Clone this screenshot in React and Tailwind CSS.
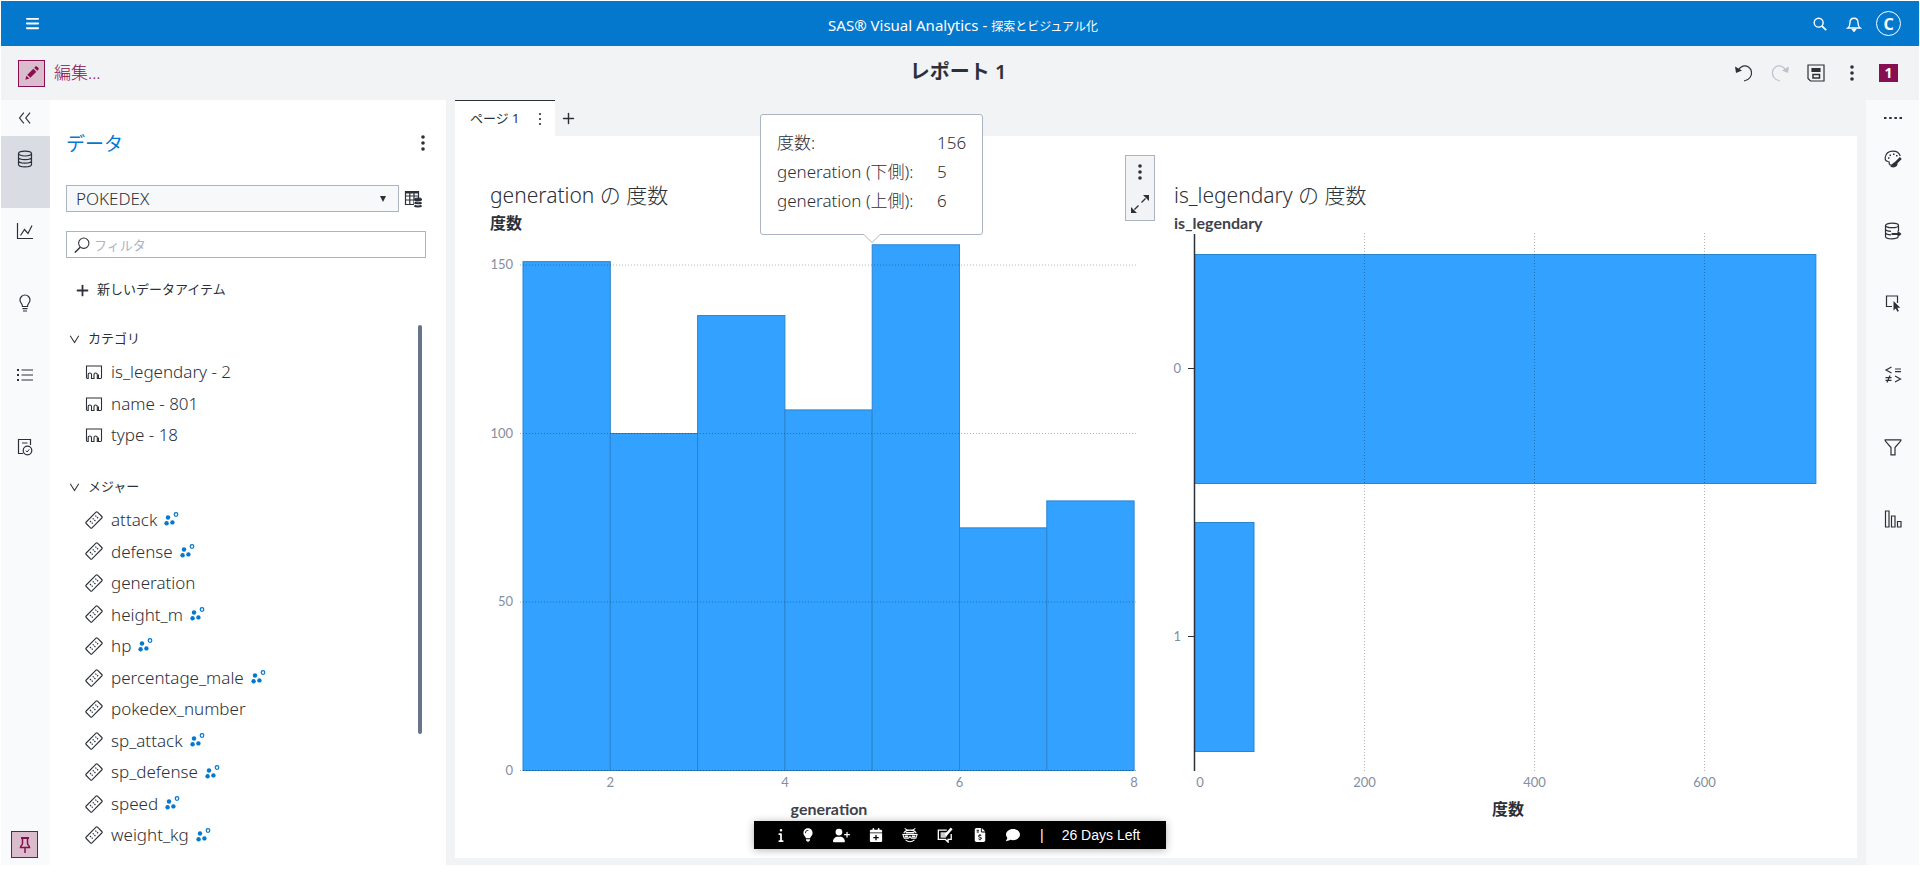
import clsx from 'clsx'
import { FaBars, FaInfo, FaLightbulb, FaUserPlus, FaFileInvoiceDollar, FaComment, FaCalendarPlus } from 'react-icons/fa6'
import { Plus } from 'lucide-react'

const categories = ['is_legendary - 2', 'name - 801', 'type - 18']

const measures = [
  { name: 'attack', related: true },
  { name: 'defense', related: true },
  { name: 'generation', related: false },
  { name: 'height_m', related: true },
  { name: 'hp', related: true },
  { name: 'percentage_male', related: true },
  { name: 'pokedex_number', related: false },
  { name: 'sp_attack', related: true },
  { name: 'sp_defense', related: true },
  { name: 'speed', related: true },
  { name: 'weight_kg', related: true },
]

const bins = [151, 100, 135, 107, 156, 72, 80]

const legendary = [
  { label: '0', value: 731 },
  { label: '1', value: 70 },
]

function Icon({ size = 18, className, children }) {
  return (
    <svg
      width={size}
      height={size}
      viewBox="0 0 18 18"
      fill="none"
      stroke="currentColor"
      strokeWidth="1.2"
      className={clsx('shrink-0', className)}
      aria-hidden="true"
    >
      {children}
    </svg>
  )
}

function Dots({ small }) {
  return (
    <Icon>
      <g fill="currentColor" stroke="none">
        <circle cx="9" cy={small ? 4 : 3} r={small ? 1.1 : 1.8} />
        <circle cx="9" cy="9" r={small ? 1.1 : 1.8} />
        <circle cx="9" cy={small ? 14 : 15} r={small ? 1.1 : 1.8} />
      </g>
    </Icon>
  )
}

const leftRail = [
  {
    label: 'データ',
    active: true,
    icon: (
      <>
        <ellipse cx="9" cy="3.6" rx="6.5" ry="2.4" />
        <path d="M2.5 3.6v10.8c0 1.4 2.9 2.4 6.5 2.4s6.5-1 6.5-2.4V3.6M2.5 7.2c0 1.4 2.9 2.4 6.5 2.4s6.5-1 6.5-2.4M2.5 10.8c0 1.4 2.9 2.4 6.5 2.4s6.5-1 6.5-2.4" />
      </>
    ),
  },
  { label: 'オブジェクト', icon: <path d="M1.5 1v15.5H17M4.5 13.5l4-6 3.5 4L16 3.5" /> },
  {
    label: '提案',
    icon: <path d="M6.5 12.5c0-3-2.5-3.5-2.5-6.5a5 5 0 0 1 10 0c0 3-2.5 3.5-2.5 6.5zM6.5 14.7h5M7 17h4" />,
  },
  {
    label: 'アウトライン',
    icon: (
      <>
        <path d="M5.5 4H17M5.5 9H17M5.5 14H17" />
        <path d="M1 4h2M1 9h2M1 14h2" strokeWidth="2" />
      </>
    ),
  },
  {
    label: 'レビュー',
    icon: (
      <>
        <path d="M7 15.5H2.5v-14h12V7M6 5h5.500" />
        <circle cx="11.5" cy="12.5" r="4.3" />
        <path d="M9.8 12.7l1.3 1.3 2.2-2.7" strokeWidth="1" />
      </>
    ),
  },
]

const rightRail = [
  {
    label: 'オプション',
    icon: (
      <>
        <path d="M8 14.8C6.5 15.5 5 14.5 5.2 12.8c.1-1-.3-1.3-1.3-1.3C1.5 11 1 9 1.2 7.5 1.8 3.5 5 1.2 9 1.2c3.5 0 6.2 1.8 7.2 4.8" />
        <path d="M4 8h1.5M5.5 5.3h1.5M9 4.3h1.5M12 5.8h1.5" strokeWidth="1.5" />
        <path d="M16.8 8l-5 5" strokeWidth="2.6" />
        <path d="M11.5 12.5c-2-.3-2.8 1.5-4.3 4 2.5.8 5.8 0 5.8-2.5z" fill="currentColor" />
      </>
    ),
  },
  {
    label: '役割',
    icon: (
      <>
        <ellipse cx="8" cy="3.4" rx="6.5" ry="2.2" />
        <path d="M1.5 3.4v11c0 1.4 2.9 2.4 6.5 2.4 3 0 5.5-.6 6.3-1.6M14.5 3.4V9M1.5 7.2c.4 1 2.5 1.9 5.5 2.1M1.5 10.8c.4 1 2.5 1.9 5.5 2.1" />
        <path d="M7.5 12H15" strokeWidth="2" />
        <path d="M13.5 8.5L17.5 12l-4 3.5z" fill="currentColor" stroke="none" />
      </>
    ),
  },
  {
    label: 'アクション',
    icon: (
      <>
        <path d="M8 12.5H2.5V2h11v7" />
        <path d="M9.5 7v9.5l2.2-2 1.7 3.3 1.5-.8-1.6-3.2h3z" fill="currentColor" stroke="none" />
      </>
    ),
  },
  {
    label: 'ルール',
    icon: <path d="M7.5 1L2 4l5.5 3M11 3h6M11 5.600h6M1.5 11.7h6M1.5 14.3h6M6 9.5l-3 7M11 10l5.5 3-5.5 3" />,
  },
  { label: 'フィルタ', icon: <path d="M1.2 1.8h15.6v1L11 9.5v7.3H7V9.5L1.2 2.8z" /> },
  {
    label: 'ランク',
    icon: <path d="M1.5 1H5v16H1.5zM7.5 6H11v11H7.5zM13.5 11.5H17V17h-3.5z" />,
  },
]

function RailButton({ item, className }) {
  return (
    <button
      type="button"
      aria-label={item.label}
      className={clsx('flex h-[72px] w-full justify-center pt-[14px]', item.active && 'bg-[#d9dce3]', className)}
    >
      <Icon>{item.icon}</Icon>
    </button>
  )
}

function Header() {
  return (
    <header className="flex h-[45px] items-center bg-[#0378cd] text-white">
      <div className="flex flex-1 pl-6">
        <button type="button" aria-label="メニュー">
          <FaBars size={15} />
        </button>
      </div>
      <h1 className="pt-1 text-[15px] font-normal leading-5">
        SAS® Visual Analytics - <span className="text-[12px]">探索とビジュアル化</span>
      </h1>
      <div className="flex flex-1 items-center justify-end gap-[18px] pr-[18px]">
        <button type="button" aria-label="検索">
          <Icon size={16}>
            <circle cx="7.5" cy="7.5" r="5" strokeWidth="1.6" />
            <path d="M11 11l5 5" strokeWidth="2" />
          </Icon>
        </button>
        <button type="button" aria-label="通知">
          <Icon size={16}>
            <path d="M2 13.5c2-1.5 2.5-3 2.5-6C4.5 4.5 6.3 2.5 9 2.5s4.5 2 4.5 5c0 3 .5 4.5 2.5 6z" strokeWidth="1.5" />
            <path d="M7 15h4l-2 2.5z" fill="currentColor" />
          </Icon>
        </button>
        <button
          type="button"
          aria-label="プロファイル"
          className="-ml-1 flex size-[25px] items-center justify-center rounded-full border border-white text-[16px] font-bold leading-none"
        >
          C
        </button>
      </div>
    </header>
  )
}

function ReportBar() {
  return (
    <div className="flex h-[54px] items-center">
      <div className="flex flex-1 items-center pl-[17px]">
        <button type="button" className="flex items-center gap-[9px] text-[17px] text-[#870f51]">
          <span className="flex size-[27px] items-center justify-center border border-[#870f51] bg-[#dbbccd]">
            <Icon size={16}>
              <g fill="currentColor" stroke="none">
                <path d="M1.5 16.5l1.2-4.5 3.3 3.3zM3.7 10.9l6.8-6.8 3.4 3.4-6.8 6.8zM11.5 3.1l1.6-1.6c.9-.9 4.3 2.5 3.4 3.4l-1.6 1.6z" />
              </g>
            </Icon>
          </span>
          編集...
        </button>
      </div>
      <h2 className="pb-0.5 text-[20px] font-semibold leading-7">レポート 1</h2>
      <div className="flex flex-1 items-center justify-end gap-[18px] pr-[21px]">
        <button type="button" aria-label="元に戻す">
          <Icon>
            <path d="M3 6.5C5.5 2 10 .5 13.5 3s4 7 1.5 10.5c-1.5 2.2-3.5 3.2-6 3.5" />
            <path d="M0 2.5l1 6.5 6-2.5z" fill="currentColor" stroke="none" />
          </Icon>
        </button>
        <button type="button" aria-label="やり直し" className="text-[#bcc2cc]" disabled>
          <Icon>
            <path d="M15 6.5C12.5 2 8 .5 4.5 3s-4 7-1.5 10.5c1.5 2.2 3.5 3.2 6 3.5" />
            <path d="M18 2.5l-1 6.5-6-2.5z" fill="currentColor" stroke="none" />
          </Icon>
        </button>
        <button type="button" aria-label="保存">
          <Icon>
            <path d="M1 1h16v16H3.5L1 14.5z" />
            <path d="M5 4.500h8v3H5z" fill="currentColor" />
            <path d="M6 10.5h6.5v3.5H6z" strokeWidth="1.5" />
          </Icon>
        </button>
        <button type="button" aria-label="その他">
          <Dots />
        </button>
        <button
          type="button"
          className="flex h-[18px] w-[19px] items-center justify-center bg-[#870f51] text-[14px] font-bold leading-none text-white"
        >
          1
        </button>
      </div>
    </div>
  )
}

function Group({ title, children, className }) {
  return (
    <section className={className}>
      <button type="button" aria-expanded="true" className="flex h-6 items-center gap-2 pl-[3px] text-[13px] font-normal">
        <Icon size={11}>
          <path d="M2 3l7 11 7-11" strokeWidth="1.7" />
        </Icon>
        {title}
      </button>
      {children}
    </section>
  )
}

function CategoryIcon() {
  return (
    <Icon>
      <path d="M1.5 15V3h15v12M1.5 15.5h1.7v-4c0-2 3.3-2 3.3 0v4H9v-4c0-2 3.3-2 3.3 0v4h1.2v-4M13 15.5h3.5" strokeWidth="1.1" />
    </Icon>
  )
}

function MeasureIcon() {
  return (
    <Icon>
      <path d="M1.2 11L11 1.2c.5-.5 1-.5 1.5 0l4.300 4.3c.5.5.5 1 0 1.5L7 16.8c-.5.5-1 .5-1.5 0L1.2 12.5c-.5-.5-.5-1 0-1.5z" strokeWidth="1.1" />
      <path d="M5 10l2.8 2.8M7.7 7.3l2.8 2.8M10.4 4.6l2.8 2.8" strokeDasharray="1.4 1" />
    </Icon>
  )
}

function RelatedIcon() {
  return (
    <svg width="15" height="15" viewBox="0 0 15 15" className="-ml-px shrink-0 fill-[#0378cd]" aria-hidden="true">
      <circle cx="4" cy="5.5" r="2.200" />
      <circle cx="2.6" cy="11.2" r="2.200" />
      <circle cx="8.4" cy="10.4" r="2.200" />
      <circle cx="12" cy="2.5" r="1.8" className="fill-white stroke-[#0378cd]" strokeWidth="1.2" />
    </svg>
  )
}

function DataPanel() {
  return (
    <section className="flex w-[396px] flex-col bg-white pl-4 pr-5">
      <div className="-mr-1.5 flex h-[85px] items-center justify-between">
        <h2 className="pt-0.5 text-[19px] font-normal leading-7 text-[#0378cd]">データ</h2>
        <button type="button" aria-label="データメニュー">
          <Dots />
        </button>
      </div>

      <div className="flex items-center gap-[5px]">
        <div className="relative h-[27px] w-[333px]">
          <select
            aria-label="データソース"
            className="h-full w-full appearance-none border border-[#abb4c2] bg-[#f6f8fa] pl-[9px] text-[17px] leading-6"
          >
            <option>POKEDEX</option>
          </select>
          <svg width="6" height="6" viewBox="0 0 6 6" className="pointer-events-none absolute right-[13px] top-[11px]" aria-hidden="true">
            <path d="M0 0h6L3 6z" fill="currentColor" />
          </svg>
        </div>
        <button type="button" aria-label="データソースの詳細">
          <Icon>
            <path d="M1.5 1.5h13v13h-13zM1.5 6h13M1.5 10h13M5.8 2v12M10 2v12" />
            <path d="M1 2.5h14" strokeWidth="2" />
            <path d="M10 8.5h8v9h-8z" fill="#fff" stroke="none" />
            <ellipse cx="14" cy="9.5" rx="3.5" ry="1.5" fill="currentColor" />
            <path d="M10.5 12.5c1 1 6 1 7 0M10.5 15.5c1 1.2 6 1.2 7 0" strokeWidth="2" />
          </Icon>
        </button>
      </div>

      <label className="mt-[19px] flex h-[27px] items-center gap-1 border border-[#abb4c2] px-[7px]">
        <Icon size={16}>
          <circle cx="11" cy="7" r="5.8" />
          <path d="M7 11.5L1 17.5" strokeWidth="1.6" />
        </Icon>
        <input
          type="text"
          aria-label="フィルタ"
          placeholder="フィルタ"
          className="w-full bg-transparent text-[13px] font-normal leading-5 outline-none placeholder:text-[#abb4c2]"
        />
      </label>

      <button type="button" className="mt-5 flex h-6 items-center gap-1.5 pl-2 text-[13px] font-normal">
        <Plus size={17} strokeWidth={2.5} />
        新しいデータアイテム
      </button>

      <div className="mt-3 flex">
        <div className="flex-1 pt-[13px]">
          <Group title="カテゴリ">
            <ul className="mt-[5px] flex h-[95px] flex-col pl-[19px] text-[17px]">
              {categories.map((name) => (
                <li key={name} className="flex flex-1 items-center gap-2">
                  <CategoryIcon />
                  {name}
                </li>
              ))}
            </ul>
          </Group>
          <Group title="メジャー" className="mt-6">
            <ul className="mt-[5px] flex h-[347px] flex-col pl-[19px] text-[17px]">
              {measures.map((item) => (
                <li key={item.name} className="flex flex-1 items-center gap-2">
                  <MeasureIcon />
                  <span>{item.name}</span>
                  {item.related && <RelatedIcon />}
                </li>
              ))}
            </ul>
          </Group>
        </div>
        <div className="mr-1 mt-[11px] h-[409px] w-1 rounded-full bg-[#67748a]" />
      </div>
    </section>
  )
}

// Both plots draw in a 666x610 space that starts under the chart title.
function Histogram() {
  const x = (v) => 33 + (v - 1) * 87.3
  const y = (v) => 555.5 - v * 3.37
  return (
    <svg viewBox="0 0 666 610" className="block w-full overflow-visible" role="img" aria-label="generation の 度数">
      <text x="0" y="14" className="fill-[#2c3038] text-[16px] font-bold">
        度数
      </text>
      {bins.map((count, i) => (
        <rect key={i} x={x(i + 1)} y={y(count)} width="87.3" height={count * 3.37} fill="#33a1ff" stroke="#2a85cf" />
      ))}
      {[0, 50, 100, 150].map((v) => (
        <g key={v}>
          <line x1="30" x2="648" y1={y(v)} y2={y(v)} stroke="#000" strokeOpacity="0.3" strokeDasharray="1 2" />
          <text x="23" y={y(v) + 4} textAnchor="end" className="fill-[#848e9f] font-[Lato,sans-serif] text-[13px] font-normal">
            {v}
          </text>
        </g>
      ))}
      {[2, 4, 6, 8].map((v) => (
        <text key={v} x={x(v)} y="572" textAnchor="middle" className="fill-[#848e9f] font-[Lato,sans-serif] text-[13px] font-normal">
          {v}
        </text>
      ))}
      <text x="339" y="600" textAnchor="middle" className="fill-[#3d424b] font-[Lato,sans-serif] text-[16px] font-bold">
        generation
      </text>
    </svg>
  )
}

function BarChart() {
  const x = (v) => 20.5 + v * 0.85
  return (
    <svg viewBox="0 0 666 610" className="block w-full overflow-visible" role="img" aria-label="is_legendary の 度数">
      <text x="0" y="14" className="fill-[#3d424b] font-[Lato,sans-serif] text-[16px] font-bold">
        is_legendary
      </text>
      {legendary.map((row, i) => (
        <g key={row.label}>
          <rect x="20.5" y={39.5 + i * 268} width={row.value * 0.85} height="229" fill="#33a1ff" stroke="#2a85cf" />
          <text x="7" y={158 + i * 268} textAnchor="end" className="fill-[#848e9f] font-[Lato,sans-serif] text-[13px] font-normal">
            {row.label}
          </text>
          <line x1="14" x2="20" y1={153.5 + i * 268} y2={153.5 + i * 268} stroke="#2c3038" />
        </g>
      ))}
      {[200, 400, 600].map((v) => (
        <line key={v} x1={x(v)} x2={x(v)} y1="18" y2="556" stroke="#000" strokeOpacity="0.3" strokeDasharray="1 2" />
      ))}
      <line x1="20.5" x2="20.5" y1="19" y2="556" stroke="#2c3038" strokeWidth="1.5" />
      {[0, 200, 400, 600].map((v) => (
        <text key={v} x={v === 0 ? 26 : x(v)} y="572" textAnchor="middle" className="fill-[#848e9f] font-[Lato,sans-serif] text-[13px] font-normal">
          {v}
        </text>
      ))}
      <text x="334" y="600" textAnchor="middle" className="fill-[#2c3038] text-[16px] font-bold">
        度数
      </text>
    </svg>
  )
}

function Tooltip() {
  return (
    <div role="tooltip" className="absolute left-[305px] top-[-22px] w-[223px] rounded-[3px] border border-[#abb4c2] bg-white px-4 pb-[19px] pt-[13px]">
      <dl className="grid grid-cols-[160px_1fr] text-[17px] leading-[29px]">
        <dt>度数:</dt>
        <dd>156</dd>
        <dt>generation (下側):</dt>
        <dd>5</dd>
        <dt>generation (上側):</dt>
        <dd>6</dd>
      </dl>
      <svg width="18" height="10" viewBox="0 0 18 10" className="absolute left-[102px] top-full" aria-hidden="true">
        <path d="M1 .5l8 8 8-8" fill="#fff" stroke="#abb4c2" />
        <path d="M1.5 0h15" stroke="#fff" strokeWidth="2" />
      </svg>
    </div>
  )
}

function Canvas() {
  return (
    <main className="flex min-w-0 flex-1 flex-col px-[9px]">
      <div className="flex h-9 items-center">
        <div className="flex h-full w-[100px] items-center justify-between border-t border-[#2c3038] bg-white pl-[15px] pr-1.5">
          <button type="button" className="text-[13px] font-normal">
            ページ 1
          </button>
          <button type="button" aria-label="ページメニュー">
            <Dots small />
          </button>
        </div>
        <button type="button" aria-label="ページの追加" className="ml-[5px]">
          <Plus size={17} />
        </button>
      </div>
      <div className="relative grid h-[722px] grid-cols-2 gap-[18px] bg-white pl-[35px] pr-[17px] pt-[43px]">
        <article className="relative">
          <h3 className="h-9 text-[21px] leading-8">generation の 度数</h3>
          <Histogram />
          <div className="absolute right-px top-[-24px] flex w-[30px] flex-col items-center gap-3.5 border border-[#abb4c2] bg-[#f2f3f5] py-[7px]">
            <button type="button" aria-label="オブジェクトメニュー">
              <Dots />
            </button>
            <button type="button" aria-label="最大化">
              <Icon>
                <path d="M10.5 7.5l4-4M7.5 10.5l-4 4" strokeWidth="1.3" />
                <path d="M12 0h6v6zM0 12v6h6z" fill="currentColor" stroke="none" />
              </Icon>
            </button>
          </div>
        </article>
        <article>
          <h3 className="h-9 text-[21px] leading-8">is_legendary の 度数</h3>
          <BarChart />
        </article>
        <Tooltip />
        <StatusBar />
      </div>
    </main>
  )
}

function StatusBar() {
  return (
    <div className="absolute left-[299px] top-[685px] flex h-7 w-[412px] items-center bg-black pl-6 text-[14px] font-normal text-white shadow-[0_1px_8px_rgba(0,0,0,0.3)]">
      <div className="flex w-[242px] items-center justify-between">
        <FaInfo size={14} className="w-[6px]" />
        <FaLightbulb size={14} className="w-[10px]" />
        <FaUserPlus size={17} />
        <FaCalendarPlus size={14} />
        <Icon size={16}>
          <path d="M3 1.5l3 2h6l3-2M2 7c1-2.5 3.500-3.5 7-3.5S15 4.500 16 7M1 8.5h16l-1.5 4h-5L9 10.5l-1.5 2h-5zM4 14.5c3 2.5 7 2.5 10 0" />
          <path d="M4 6.5h10M3 10.5h4M11 10.5h4" strokeWidth="1.8" />
        </Icon>
        <Icon size={16}>
          <path d="M16 8v6h-3.5v3l-3-3h-8V3.5H11" strokeWidth="1.5" />
          <path d="M4 6h9l-3 6H4z" fill="#ccc" stroke="none" />
          <path d="M9.500 9.5l7-8" strokeWidth="2.8" />
        </Icon>
        <FaFileInvoiceDollar size={14} />
        <FaComment size={14} />
      </div>
      <span className="ml-5 font-['Liberation_Sans',sans-serif]">|</span>
      <span className="ml-[18px] font-['Liberation_Sans',sans-serif]">26 Days Left</span>
    </div>
  )
}

export default function App() {
  return (
    <div className="min-h-screen bg-white pl-px pr-px pt-px font-['Noto_Sans','Noto_Sans_CJK_JP',sans-serif] font-light text-[#2c3038]">
      <Header />
      <div className="bg-[#f2f3f5]">
        <ReportBar />
        <div className="flex">
          <nav className="flex h-[765px] w-[49px] flex-col items-center bg-[#f9fafc]">
            <button type="button" aria-label="折りたたむ" className="flex h-9 items-center pr-0.5">
              <Icon size={14}>
                <path d="M7.5 2L2 9l5.5 7M15.5 2L10 9l5.5 7" strokeWidth="1.5" />
              </Icon>
            </button>
            {leftRail.map((item) => (
              <RailButton key={item.label} item={item} className="pr-0.5" />
            ))}
            <button
              type="button"
              aria-label="ピン留め"
              className="mb-[7px] mr-0.5 mt-auto flex size-[27px] items-center justify-center border border-[#870f51] bg-[#dbbccd] text-[#870f51]"
            >
              <Icon>
                <path d="M5 2h8" strokeWidth="2" />
                <path d="M6.5 2v5.5c0 1.5-2 2-2 4h9c0-2-2-2.5-2-4V2M9 11.5V17" strokeWidth="1.5" />
              </Icon>
            </button>
          </nav>
          <DataPanel />
          <Canvas />
          <nav className="flex w-[53px] flex-col items-center bg-[#f9fafc]">
            <button type="button" aria-label="ペインメニュー" className="flex h-9 items-center">
              <Icon>
                <path d="M0 9h2.5M5.2 9h2.5M10.4 9h2.5M15.5 9H18" strokeWidth="2" />
              </Icon>
            </button>
            {rightRail.map((item) => (
              <RailButton key={item.label} item={item} />
            ))}
          </nav>
        </div>
      </div>
    </div>
  )
}
